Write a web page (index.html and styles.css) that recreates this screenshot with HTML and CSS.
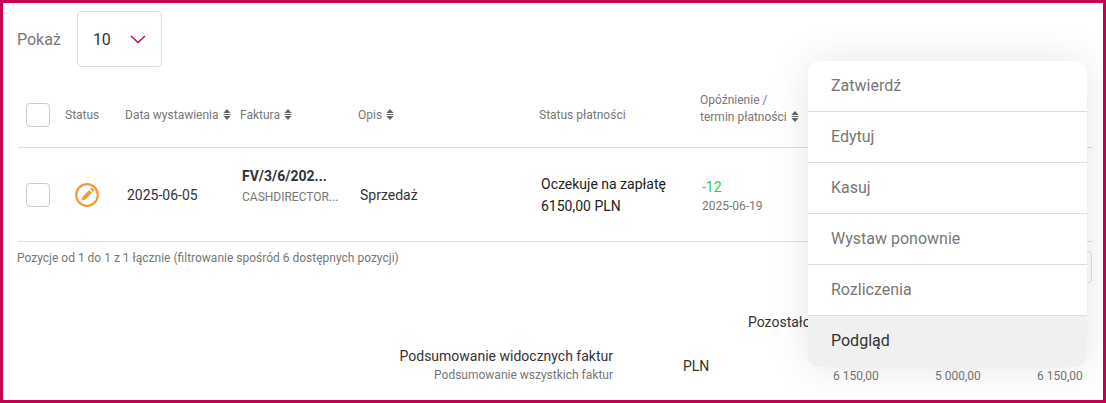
FILE: index.html
```html
<!DOCTYPE html>
<html lang="pl">
<head>
    <meta charset="UTF-8">
    <title>Faktury</title>
    <link rel="stylesheet" href="styles.css">
</head>
<body>
    <div class="frame">
        <div class="page-size">
            <span class="page-size-label">Pokaż</span>
            <div class="page-size-select">
                <span>10</span>
                <svg class="chevron" width="16" height="9" viewBox="0 0 16 9"><path d="M1 1l7 6.5L15 1" fill="none" stroke="#c70052" stroke-width="1.4"/></svg>
            </div>
        </div>

        <div class="table-row table-head">
            <div class="cell"><span class="checkbox"></span></div>
            <div class="cell">Status</div>
            <div class="cell">Data wystawienia <svg class="sort" width="8" height="11" viewBox="0 0 8 11"><path d="M4 0l3.6 4H.4zM4 11L.4 7h7.2zM.6 5h6.8v1H.6z" fill="#666"/></svg></div>
            <div class="cell">Faktura <svg class="sort" width="8" height="11" viewBox="0 0 8 11"><path d="M4 0l3.6 4H.4zM4 11L.4 7h7.2zM.6 5h6.8v1H.6z" fill="#666"/></svg></div>
            <div class="cell">Opis <svg class="sort" width="8" height="11" viewBox="0 0 8 11"><path d="M4 0l3.6 4H.4zM4 11L.4 7h7.2zM.6 5h6.8v1H.6z" fill="#666"/></svg></div>
            <div class="cell">Status płatności</div>
            <div class="cell cell-delay">Opóźnienie /<br>termin płatności <svg class="sort" width="8" height="11" viewBox="0 0 8 11"><path d="M4 0l3.6 4H.4zM4 11L.4 7h7.2zM.6 5h6.8v1H.6z" fill="#666"/></svg></div>
        </div>

        <div class="table-row table-body">
            <div class="cell"><span class="checkbox"></span></div>
            <div class="cell">
                <svg class="status-icon" width="26" height="26" viewBox="0 0 26 26">
                    <circle cx="13" cy="13" r="10.8" fill="none" stroke="#f59b38" stroke-width="2.2"/>
                    <path d="M7.6 18.400l1-3.900 6.600-6.600 2.900 2.900-6.600 6.600zM16 7.100l1-1c.4-.4 1-.4 1.400 0l1.500 1.500c.4.4.4 1 0 1.400l-1 1z" fill="#f59b38"/>
                </svg>
            </div>
            <div class="cell cell-text">2025-06-05</div>
            <div class="cell cell-text cell-invoice">
                <div class="invoice-no">FV/3/6/202...</div>
                <div class="invoice-client">CASHDIRECTOR...</div>
            </div>
            <div class="cell cell-text">Sprzedaż</div>
            <div class="cell cell-text payment-status">Oczekuje na zapłatę<br>6150,00 PLN</div>
            <div class="cell cell-text cell-due">
                <div class="delay-days">-12</div>
                <div class="delay-date">2025-06-19</div>
            </div>
        </div>

        <div class="table-foot">
            <span class="table-info">Pozycje od 1 do 1 z 1 łącznie (filtrowanie spośród 6 dostępnych pozycji)</span>
            <div class="pagination-box"></div>
        </div>

        <div class="summary">
            <div class="summary-heading">Pozostało do zapłaty</div>
            <div class="summary-grid">
                <div class="summary-labels">
                    <div class="summary-visible">Podsumowanie widocznych faktur</div>
                    <div class="summary-all">Podsumowanie wszystkich faktur</div>
                </div>
                <div class="summary-currency">PLN</div>
                <div class="summary-amount">6 150,00</div>
                <div class="summary-amount">5 000,00</div>
                <div class="summary-amount">6 150,00</div>
            </div>
        </div>

        <ul class="action-menu">
            <li>Zatwierdź</li>
            <li>Edytuj</li>
            <li>Kasuj</li>
            <li>Wystaw ponownie</li>
            <li>Rozliczenia</li>
            <li class="active">Podgląd</li>
        </ul>
    </div>
</body>
</html>
```

FILE: styles.css
```css
html, body {
    margin: 0;
    height: 100%;
    overflow: hidden;
    background: white;
}
.frame {
    position: relative;
    box-sizing: border-box;
    width: 1106px;
    height: 403px;
    padding: 8px 11px 0 15px;
    border: 3px solid #c70052;
    overflow: hidden;
    font-family: Roboto, sans-serif;
    color: #333;
}
.page-size {
    display: flex;
    align-items: center;
    height: 56px;
    gap: 16px;
}
.page-size-label {
    font-size: 16px;
    color: #777;
    margin-left: -1px;
}
.page-size-select {
    box-sizing: border-box;
    display: flex;
    align-items: center;
    width: 85px;
    height: 56px;
    padding-left: 15px;
    gap: 19px;
    border: 1px solid #ddd;
    border-radius: 4px;
    font-size: 16px;
}
.table-row {
    display: grid;
    grid-template-columns: 47px 60px 115px 118px 181px 161px 1fr;
    align-items: center;
    border-bottom: 1px solid #ddd;
}
.table-head {
    box-sizing: border-box;
    height: 81px;
    padding-top: 16px;
    font-size: 12px;
    color: #777;
}
.table-body {
    box-sizing: border-box;
    height: 94px;
    font-size: 14px;
}
.cell-text {
    padding-left: 2px;
}
.cell-delay {
    line-height: 17px;
    margin-top: -13px;
}
.cell-invoice {
    padding-bottom: 19px;
}
.cell-due {
    padding-top: 2px;
}
.sort {
    vertical-align: -1px;
    margin-left: 1px;
}
.checkbox {
    display: block;
    box-sizing: border-box;
    width: 24px;
    height: 24px;
    margin-left: 8px;
    border: 1px solid #ccc;
    border-radius: 4px;
    background: white;
}
.status-icon {
    display: block;
    margin-left: 9px;
}
.invoice-no {
    font-weight: 700;
    color: #333;
    line-height: 20px;
    margin-bottom: 3px;
}
.invoice-client {
    font-size: 12px;
    color: #777;
    line-height: 16px;
}
.payment-status {
    line-height: 22px;
    color: #222;
}
.delay-days {
    color: #2ecc40;
    line-height: 20px;
}
.delay-date {
    font-size: 12px;
    color: #777;
    line-height: 18px;
}
.table-foot {
    display: flex;
    justify-content: space-between;
    height: 72px;
    padding-top: 9px;
    box-sizing: border-box;
    font-size: 12px;
    color: #777;
}
.table-info {
    margin-left: -1px;
}
.pagination-box {
    width: 20px;
    height: 30px;
    border: 1px solid #ddd;
    border-radius: 4px;
}
.summary {
    font-size: 14px;
}
.summary-heading {
    padding-left: 730px;
    white-space: nowrap;
}
.summary-grid {
    display: grid;
    grid-template-columns: 595px 220px 102px 102px 45px;
    align-items: start;
    margin-top: 17px;
}
.summary-labels {
    text-align: right;
}
.summary-visible {
    line-height: 18px;
}
.summary-all {
    font-size: 12px;
    line-height: 18px;
    margin-top: 1px;
    color: #777;
}
.summary-currency {
    padding: 11px 0 0 70px;
}
.summary-amount {
    padding-top: 22px;
    font-size: 12px;
    color: #777;
    white-space: nowrap;
}
.action-menu {
    position: absolute;
    top: 58px;
    left: 805px;
    width: 279px;
    margin: 0;
    padding: 0;
    list-style: none;
    background: white;
    border-radius: 12px;
    box-shadow: 0 0 40px rgba(0,0,0,0.1);
    overflow: hidden;
}
.action-menu li {
    box-sizing: border-box;
    height: 51px;
    padding-left: 23px;
    line-height: 50px;
    font-size: 16px;
    color: #777;
    border-bottom: 1px solid #ddd;
}
.action-menu li.active {
    background: #f0f0f0;
    color: #333;
    border-bottom: none;
}
```
